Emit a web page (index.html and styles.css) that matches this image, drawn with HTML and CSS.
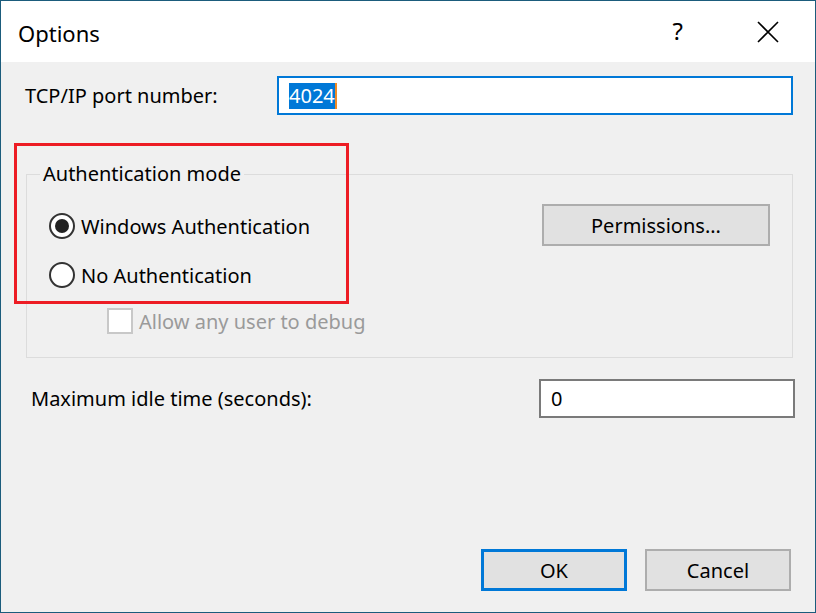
FILE: index.html
```html
<!DOCTYPE html>
<html lang="en">
<head>
<meta charset="utf-8">
<title>Options</title>
<link rel="stylesheet" href="styles.css">
</head>
<body>
<div class="window">
  <div class="titlebar">
    <span class="title">Options</span>
    <span class="help">?</span>
    <span class="close">
      <svg width="22" height="22" viewBox="0 0 22 22"><path d="M1 1 L21 21 M21 1 L1 21" stroke="#000" stroke-width="1.6" fill="none"/></svg>
    </span>
  </div>
  <div class="content">
    <div class="row row-port">
      <label class="label label-port">TCP/IP port number:</label>
      <div class="input input-focus"><span class="sel">4024</span><span class="caret"></span></div>
    </div>
    <fieldset class="group">
      <legend class="legend">Authentication mode</legend>
      <div class="group-inner">
        <div class="options">
          <div class="radio-row">
            <span class="radio checked"></span><span class="opt-text">Windows Authentication</span>
          </div>
          <div class="radio-row">
            <span class="radio"></span><span class="opt-text">No Authentication</span>
          </div>
          <div class="check-row">
            <span class="checkbox"></span><span class="opt-text disabled">Allow any user to debug</span>
          </div>
        </div>
        <div class="btn btn-perm">Permissions...</div>
      </div>
    </fieldset>
    <div class="row row-idle">
      <label class="label label-idle">Maximum idle time (seconds):</label>
      <div class="input input-idle">0</div>
    </div>
    <div class="footer">
      <div class="btn btn-ok">OK</div>
      <div class="btn btn-cancel">Cancel</div>
    </div>
  </div>
  <div class="annotation"></div>
</div>
</body>
</html>
```

FILE: styles.css
```css
html, body {
  margin: 0;
  padding: 0;
  background: #f0f0f0;
}
.window {
  position: relative;
  width: 816px;
  height: 613px;
  box-sizing: border-box;
  border: 1px solid #1b5c7c;
  display: flex;
  flex-direction: column;
  font-family: "Noto Sans", "Open Sans", sans-serif;
  font-size: 20px;
  color: #000;
}
.titlebar {
  height: 61px;
  background: #fff;
  display: flex;
  align-items: center;
  padding-left: 17px;
  flex-shrink: 0;
}
.title {
  font-size: 22px;
  flex: 1;
  margin-top: 2px;
}
.help {
  font-size: 24px;
  margin-right: 74px;
  margin-top: -2px;
}
.close {
  width: 22px;
  height: 22px;
  margin-right: 36px;
  display: flex;
}
.content {
  flex: 1;
  display: flex;
  flex-direction: column;
  padding: 0 20px 21px 24px;
  background: #f0f0f0;
}
.row {
  display: flex;
  align-items: center;
}
.row-port {
  margin-top: 14px;
  margin-right: 2px;
}
.label-port {
  width: 252px;
}
.input {
  height: 39px;
  box-sizing: border-box;
  background: #fff;
  display: flex;
  align-items: center;
  padding-left: 10px;
}
.input-focus {
  width: 516px;
  border: 2px solid #0078d7;
}
.sel {
  background: #0078d7;
  color: #fff;
  height: 26px;
  line-height: 26px;
  display: inline-block;
}
.caret {
  width: 2px;
  height: 26px;
  background: #f08a24;
  display: inline-block;
}
.group {
  margin: 48px 0 0 1px;
  width: 767px;
  box-sizing: border-box;
  padding: 0;
  border: 1px solid #dcdcdc;
  min-width: 0;
}
.legend {
  margin-left: 13px;
  padding: 0 3px;
  line-height: 22px;
  height: 22px;
}
.group-inner {
  display: flex;
  justify-content: space-between;
  align-items: flex-start;
}
.options {
  padding: 26px 0 21px 0;
  display: flex;
  flex-direction: column;
}
.radio-row {
  height: 30px;
  display: flex;
  align-items: center;
  padding-left: 22px;
}
.radio-row + .radio-row {
  margin-top: 19px;
}
.check-row {
  height: 30px;
  display: flex;
  align-items: center;
  padding-left: 80px;
  margin-top: 16px;
}
.radio {
  width: 26px;
  height: 26px;
  box-sizing: border-box;
  border: 2px solid #333;
  border-radius: 50%;
  background: #fff;
  display: flex;
  align-items: center;
  justify-content: center;
}
.radio.checked::after {
  content: "";
  width: 14px;
  height: 14px;
  border-radius: 50%;
  background: #222;
}
.checkbox {
  width: 26px;
  height: 26px;
  box-sizing: border-box;
  border: 2px solid #c8c8c8;
  background: #fff;
}
.opt-text {
  margin-left: 6px;
}
.disabled {
  color: #9a9a9a;
}
.btn {
  height: 42px;
  box-sizing: border-box;
  background: #e1e1e1;
  border: 2px solid #adadad;
  display: flex;
  align-items: center;
  justify-content: center;
}
.btn-perm {
  width: 228px;
  margin-top: 19px;
  margin-right: 22px;
}
.row-idle {
  margin-top: 21px;
  justify-content: space-between;
}
.label-idle {
  margin-left: 6px;
}
.input-idle {
  width: 256px;
  border: 2px solid #7a7a7a;
}
.footer {
  margin-top: auto;
  display: flex;
  justify-content: flex-end;
  gap: 18px;
  margin-right: 4px;
}
.btn-ok {
  width: 146px;
  border: 3px solid #0078d7;
}
.btn-cancel {
  width: 146px;
}
.annotation {
  position: absolute;
  left: 13px;
  top: 142px;
  width: 335px;
  height: 161px;
  box-sizing: border-box;
  border: 3px solid #ed1c24;
  pointer-events: none;
}
```
